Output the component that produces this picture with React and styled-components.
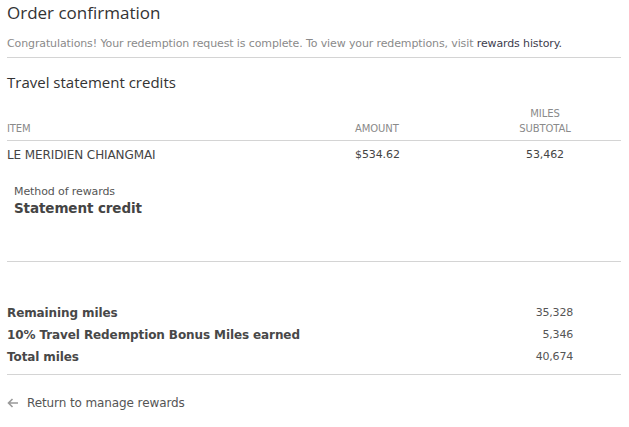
import React from "react";
import styled, { createGlobalStyle } from "styled-components";

const Global = createGlobalStyle`
  html, body { margin: 0; padding: 0; background: #fff; }
  body { font-family: "DejaVu Sans", Tahoma, sans-serif; color: #444; }
`;

const Page = styled.div`
  padding: 0 8px 0 7px;
  width: 614px;
`;

const Title = styled.h1`
  margin: 0;
  padding-top: 3px;
  font-family: "Open Sans", "DejaVu Sans", sans-serif;
  font-weight: 400;
  font-size: 17px;
  line-height: 20px;
  color: #333;
`;

const Intro = styled.p`
  margin: 13px 0 0;
  font-size: 11px;
  line-height: 16px;
  color: #8a8a8a;
  letter-spacing: -0.12px;
  padding-bottom: 5px;
  border-bottom: 1px solid #d4d4d4;
`;

const Link = styled.a`
  color: #3d3d4d;
  text-decoration: none;
`;

const Section = styled.h2`
  margin: 14px 0 0;
  font-family: "Open Sans", "DejaVu Sans", sans-serif;
  font-weight: 400;
  font-size: 15px;
  line-height: 20px;
  color: #333;
`;

const Row = styled.div`
  display: grid;
  grid-template-columns: 348px 150px 80px 1fr;
  align-items: end;
  border-bottom: ${(p) => (p.$line ? "1px solid #d4d4d4" : "none")};
  padding: ${(p) => p.$pad || "0"};
`;

const Head = styled.div`
  font-size: 10px;
  line-height: 15px;
  color: #8a8a8a;
  text-align: ${(p) => p.$align || "left"};
  letter-spacing: -0.1px;
`;

const Cell = styled.div`
  font-size: ${(p) => p.$size || "11px"};
  line-height: 16px;
  color: #444;
  text-align: ${(p) => p.$align || "left"};
  letter-spacing: -0.1px;
`;

const Method = styled.div`
  margin: 21px 0 0 7px;
`;

const MethodLabel = styled.div`
  font-size: 11px;
  line-height: 15px;
  color: #555;
  letter-spacing: -0.1px;
`;

const MethodValue = styled.div`
  font-size: 13.5px;
  line-height: 18px;
  font-weight: 700;
  color: #444;
  letter-spacing: -0.1px;
`;

const Divider = styled.hr`
  margin: ${(p) => p.$m || "0"};
  border: 0;
  border-top: 1px solid #d4d4d4;
`;

const Totals = styled.div`
  display: flex;
  flex-direction: column;
  gap: 6px;
  padding-bottom: 9px;
  border-bottom: 1px solid #d4d4d4;
`;

const TotalRow = styled.div`
  display: flex;
  justify-content: space-between;
  align-items: center;
  padding-right: 48px;
  height: 16px;
`;

const TotalLabel = styled.span`
  font-size: 12px;
  line-height: 16px;
  font-weight: 700;
  color: #484848;
  letter-spacing: -0.1px;
`;

const TotalValue = styled.span`
  font-size: 11px;
  line-height: 16px;
  color: #555;
  letter-spacing: -0.2px;
`;

const Back = styled.a`
  display: flex;
  align-items: center;
  gap: 8px;
  margin-top: 20px;
  font-size: 12px;
  line-height: 16px;
  color: #555;
  text-decoration: none;
  letter-spacing: -0.1px;
`;

export default function App() {
  return (
    <>
      <Global />
      <Page>
        <Title>Order confirmation</Title>
        <Intro>
          Congratulations! Your redemption request is complete. To view your redemptions, visit{" "}
          <Link href="#">rewards history.</Link>
        </Intro>
        <Section>Travel statement credits</Section>
        <Row $line $pad="14px 0 4px">
          <Head>ITEM</Head>
          <Head>AMOUNT</Head>
          <Head $align="center">MILES<br />SUBTOTAL</Head>
          <div />
        </Row>
        <Row $pad="6px 0 0">
          <Cell $size="12px">LE MERIDIEN CHIANGMAI</Cell>
          <Cell>$534.62</Cell>
          <Cell $align="center">53,462</Cell>
          <div />
        </Row>
        <Method>
          <MethodLabel>Method of rewards</MethodLabel>
          <MethodValue>Statement credit</MethodValue>
        </Method>
        <Divider $m="44px 0 43px" />
        <Totals>
          <TotalRow><TotalLabel>Remaining miles</TotalLabel><TotalValue>35,328</TotalValue></TotalRow>
          <TotalRow><TotalLabel>10% Travel Redemption Bonus Miles earned</TotalLabel><TotalValue>5,346</TotalValue></TotalRow>
          <TotalRow><TotalLabel>Total miles</TotalLabel><TotalValue>40,674</TotalValue></TotalRow>
        </Totals>
        <Back href="#">
          <svg width="12" height="10" viewBox="0 0 12 10" fill="none" stroke="#999" strokeWidth="1.6">
            <path d="M11 5H1.5M5.5 1L1.5 5l4 4" />
          </svg>
          Return to manage rewards
        </Back>
      </Page>
    </>
  );
}
